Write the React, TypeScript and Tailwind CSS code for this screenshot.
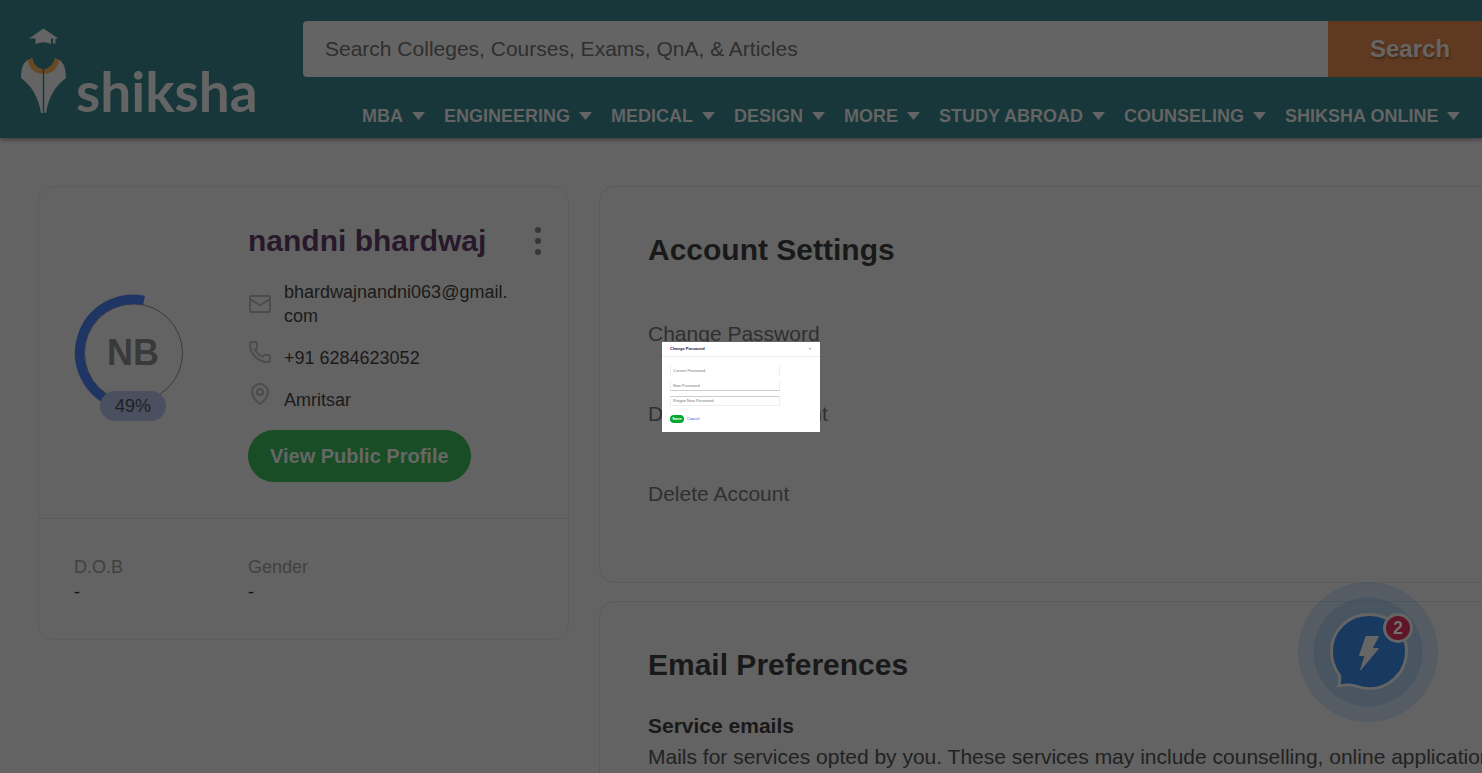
import React from "react";
import { Mail, MapPin, Phone } from "lucide-react";

const navItems = [
  "MBA",
  "ENGINEERING",
  "MEDICAL",
  "DESIGN",
  "MORE",
  "STUDY ABROAD",
  "COUNSELING",
  "SHIKSHA ONLINE",
];

function Logo() {
  return (
    <a href="#" aria-label="shiksha" className="flex w-[303px] shrink-0 items-start pl-5 pt-7 text-[#646464]">
      <svg viewBox="0 0 48 86" className="h-[86px] w-12 shrink-0" fill="currentColor" aria-hidden="true">
        <path d="M23.500 .5 9 10.500h6.500v5.500q8-3.500 15.500 0v-5.500h2v5h2.500v-5h2.800z" />
        <path d="M12 30.500C4.500 32 1.200 37 1 50c11 8.500 17.500 19 20 35h1.800V45C17 43 13 38 12 30.500z" />
        <path d="M35 30.500C42.500 32 45.800 37 46 50c-11 8.500-17.500 19-20 35h-1.800V45C30 43 34 38 35 30.500z" />
        <path
          fill="#674a23"
          d="M12.500 30 7.800 32c1 8 6.500 13.700 15 14v-4.800C17 40 13.500 36.500 12.500 30zM34.500 30l4.700 2c-1 8-6.500 13.700-15 14v-4.800C30 40 33.500 36.500 34.500 30z"
        />
      </svg>
      <span className="ml-2 mt-7 font-[Lato] text-[55px] font-bold leading-[70px]">shiksha</span>
    </a>
  );
}

function Header() {
  return (
    <header className="flex h-[138px] shrink-0 bg-[#17373a] shadow-[0_2px_4px_rgba(0,0,0,0.35)]">
      <Logo />
      <div className="min-w-0 flex-1 pt-[21px]">
        <form className="flex h-14">
          <input
            type="search"
            aria-label="Search"
            placeholder="Search Colleges, Courses, Exams, QnA, & Articles"
            className="min-w-0 flex-1 rounded-l bg-[#646464] px-[22px] text-[21px] text-[#2f2f2f] outline-none placeholder:text-[#2f2f2f]"
          />
          <button
            type="button"
            className="w-[154px] shrink-0 bg-[#5f3a21] pl-[42px] text-left text-2xl font-bold text-[#676564] [text-shadow:1px_2px_2px_rgba(0,0,0,0.3)]"
          >
            Search
          </button>
        </form>
        <nav className="mt-[25px] flex gap-[19px] pl-[59px]">
          {navItems.map((item) => (
            <a key={item} href="#" className="flex items-center gap-[9px] whitespace-nowrap text-lg leading-7 font-bold text-[#646464]">
              {item}
              <svg viewBox="0 0 13 8" className="h-2 w-[13px]" fill="currentColor" aria-hidden="true">
                <path d="M0 0h13L6.500 8z" />
              </svg>
            </a>
          ))}
        </nav>
      </div>
    </header>
  );
}

function Avatar() {
  return (
    <div className="relative mt-[107px] h-[130px] w-[118px]">
      <svg viewBox="0 0 118 130" className="h-full w-full" fill="none" aria-hidden="true">
        <circle cx="59.500" cy="59" r="49" stroke="#3b3b3b" />
        <path d="M70 6.300A53.700 53.700 0 0 0 36 107.300" stroke="#1f3564" strokeWidth="9.500" />
      </svg>
      <span className="absolute inset-x-0 top-8 text-center text-4xl leading-[54px] font-bold text-[#3a3a3a]">NB</span>
      <span className="absolute left-[26px] top-[97px] w-[66px] rounded-full bg-[#4a505f] text-center text-lg leading-[30px] text-[#202020]">
        49%
      </span>
    </div>
  );
}

function ProfileCard() {
  return (
    <section className="w-[531px] shrink-0 self-start rounded-2xl border border-[#5d5d5d]">
      <div className="flex h-[332px] border-b border-[#5b5b5b] pl-[35px]">
        <div className="w-[174px] shrink-0">
          <Avatar />
        </div>
        <div className="min-w-0 flex-1 pt-9">
          <div className="flex items-center justify-between pr-[21px]">
            <h1 className="text-[30px] leading-9 font-bold text-[#27192a]">nandni bhardwaj</h1>
            <button type="button" aria-label="More options" className="flex w-[18px] flex-col items-center gap-[5px] text-[#363636]">
              <span className="size-1.5 rounded-full bg-current" />
              <span className="size-1.5 rounded-full bg-current" />
              <span className="size-1.5 rounded-full bg-current" />
            </button>
          </div>
          <ul className="mt-[21px] flex flex-col gap-[18px] text-lg leading-6 text-[#1a1a1a]">
            <li className="flex items-center gap-3">
              <Mail className="size-6 shrink-0 text-[#4c4c4c]" strokeWidth={2} />
              <span>bhardwajnandni063@gmail.<br />com</span>
            </li>
            <li className="flex gap-3">
              <Phone className="-mt-1.5 size-6 shrink-0 text-[#4c4c4c]" strokeWidth={2} />
              <span>+91 6284623052</span>
            </li>
            <li className="flex gap-3">
              <MapPin className="-mt-1.5 size-6 shrink-0 text-[#4c4c4c]" strokeWidth={2} />
              <span>Amritsar</span>
            </li>
          </ul>
          <button type="button" className="mt-[18px] h-[52px] rounded-full bg-[#184d26] px-[22px] text-xl font-bold text-[#676767]">
            View Public Profile
          </button>
        </div>
      </div>
      <dl className="flex px-[35px] pt-9 pb-[34px] text-lg leading-[25px]">
        <div className="w-[174px]">
          <dt className="text-[#414141]">D.O.B</dt>
          <dd className="text-[#121212]">-</dd>
        </div>
        <div>
          <dt className="text-[#414141]">Gender</dt>
          <dd className="text-[#121212]">-</dd>
        </div>
      </dl>
    </section>
  );
}

function SettingsPanels() {
  return (
    <div className="flex min-w-0 flex-1 flex-col gap-[18px]">
      <section className="h-[397px] rounded-l-2xl border border-r-0 border-[#5b5b5b] pl-12 pt-[45px]">
        <h2 className="text-[30px] leading-9 font-bold text-[#191919]">Account Settings</h2>
        <ul className="mt-[50px] flex flex-col gap-12 text-[21px] leading-8 text-[#303030]">
          <li><a href="#">Change Password</a></li>
          <li><a href="#">Deactivate Account</a></li>
          <li><a href="#">Delete Account</a></li>
        </ul>
      </section>
      <section className="rounded-tl-2xl border border-r-0 border-[#5b5b5b] pl-12 pt-[45px] pb-12">
        <h2 className="text-[30px] leading-9 font-bold text-[#191919]">Email Preferences</h2>
        <h3 className="mt-[27px] text-[21px] leading-8 font-bold text-[#191919]">Service emails</h3>
        <p className="whitespace-nowrap text-[21px] leading-[30px] text-[#222222]">
          Mails for services opted by you. These services may include counselling, online application
        </p>
      </section>
    </div>
  );
}

function ChatButton() {
  return (
    <button type="button" aria-label="Open chat" className="fixed right-11 bottom-[51px] size-[140px]">
      <svg viewBox="0 0 140 140" className="size-full" aria-hidden="true">
        <circle cx="70" cy="70" r="70" fill="#1f3f6b" fillOpacity=".2" />
        <circle cx="70" cy="70" r="54.500" fill="#1f4058" fillOpacity=".2" />
        <path
          d="M70 33a37 37 0 1 1-11 72q-5-2-11-1.500l-8 .9q2.500-5.500.6-11.400Q33 83 33 70A37 37 0 0 1 70 33z"
          transform="translate(.5 -.5)"
          fill="#183a61"
          stroke="#656565"
          strokeWidth="2.800"
        />
        <path d="M68 54.500H80.500L74 66.500H80.500L62.500 88 67 73.500H61.500z" fill="#666" stroke="#666" strokeLinejoin="round" />
        <circle cx="100" cy="46" r="13.500" fill="#611628" stroke="#656565" strokeWidth="3" />
      </svg>
      <span className="absolute left-[90px] top-[34px] w-5 text-center text-lg leading-6 font-bold text-[#707070]">2</span>
    </button>
  );
}

function PasswordDialog() {
  return (
    <div className="fixed inset-0 flex items-center justify-center">
      <div
        role="dialog"
        aria-label="Change Password"
        className="h-[90px] w-[158px] bg-white text-[4px] leading-[5px] text-[#777]"
      >
        <div className="flex h-[15px] items-center justify-between border-b border-[#eeeeee] px-2">
          <h2 className="font-bold text-[#2d1237]">Change Password</h2>
          <button type="button" aria-label="Close" className="w-1 text-[#333]">×</button>
        </div>
        <form className="flex flex-col gap-[5px] pt-[9px] pl-2">
          <input
            type="password"
            aria-label="Current Password"
            placeholder="Current Password"
            className="h-2.5 w-[110px] border-x border-[#eeeeee] px-0.5 outline-none placeholder:text-[#777]"
          />
          <input
            type="password"
            aria-label="New Password"
            placeholder="New Password"
            className="h-2.5 w-[110px] border-x border-b border-x-[#eeeeee] border-b-[#cfcfcf] px-0.5 outline-none placeholder:text-[#777]"
          />
          <input
            type="password"
            aria-label="Retype New Password"
            placeholder="Retype New Password"
            className="h-2.5 w-[110px] rounded-[1px] border border-[#eeeeee] border-t-[#cccccc] px-0.5 outline-none placeholder:text-[#777]"
          />
          <div className="mt-1 flex items-center gap-[3px]">
            <button type="button" className="flex h-2 w-3.5 items-center justify-center rounded-full bg-[#00a82d] font-bold text-white">
              Save
            </button>
            <button type="button" className="text-[#2457d6]">Cancel</button>
          </div>
        </form>
      </div>
    </div>
  );
}

export default function App() {
  return (
    <div className="flex h-screen flex-col overflow-hidden bg-[#636363] font-['Liberation_Sans',Arial,sans-serif]">
      <Header />
      <main className="flex gap-[30px] pt-12 pl-[38px]">
        <ProfileCard />
        <SettingsPanels />
      </main>
      <ChatButton />
      <PasswordDialog />
    </div>
  );
}
